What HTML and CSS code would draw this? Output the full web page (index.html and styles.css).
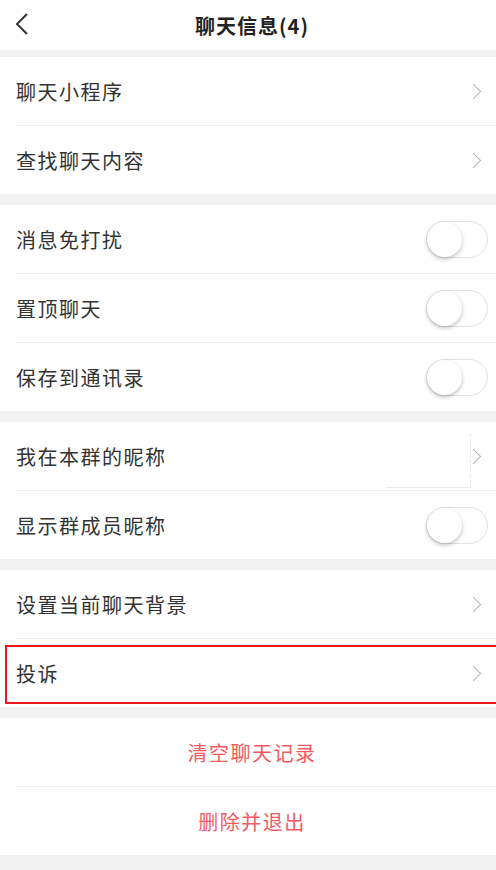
FILE: index.html
```html
<!DOCTYPE html>
<html lang="zh-CN">
<head>
  <meta charset="UTF-8">
  <meta name="viewport" content="width=device-width, initial-scale=1.0">
  <title>聊天信息</title>
  <link rel="stylesheet" href="styles.css">
</head>
<body>
  <div class="header">
    <span class="back">
      <svg width="14" height="22" viewBox="0 0 14 22"><path d="M12 1 L2 11 L12 21" fill="none" stroke="#333" stroke-width="2"/></svg>
    </span>
    <span class="title">聊天信息(4)</span>
  </div>

  <div class="group">
    <div class="row"><span class="label">聊天小程序</span><span class="arrow"></span></div>
    <div class="row"><span class="label">查找聊天内容</span><span class="arrow"></span></div>
  </div>

  <div class="group">
    <div class="row"><span class="label">消息免打扰</span><span class="switch"></span></div>
    <div class="row"><span class="label">置顶聊天</span><span class="switch"></span></div>
    <div class="row"><span class="label">保存到通讯录</span><span class="switch"></span></div>
  </div>

  <div class="group">
    <div class="row"><span class="label">我在本群的昵称</span><span class="ghost"></span><span class="arrow"></span></div>
    <div class="row"><span class="label">显示群成员昵称</span><span class="switch"></span></div>
  </div>

  <div class="group">
    <div class="row"><span class="label">设置当前聊天背景</span><span class="arrow"></span></div>
    <div class="row marked"><span class="label">投诉</span><span class="arrow"></span></div>
  </div>

  <div class="group">
    <div class="row action">清空聊天记录</div>
    <div class="row action">删除并退出</div>
  </div>
</body>
</html>
```

FILE: styles.css
```css
body {
  margin: 0;
  background-color: #f2f2f2;
  font-family: "Noto Sans CJK SC", "Noto Sans", sans-serif;
  color: #333;
}
.header {
  height: 50px;
  background-color: #fff;
  display: flex;
  align-items: center;
  justify-content: center;
  position: relative;
  margin-bottom: 7px;
}
.back {
  position: absolute;
  left: 15px;
  top: 13px;
  height: 22px;
}
.title {
  font-size: 20px;
  font-weight: bold;
  color: #222;
  letter-spacing: 1px;
  margin-left: 8px;
}
.group {
  background-color: #fff;
  margin-bottom: 11px;
}
.row {
  height: 68px;
  display: flex;
  align-items: center;
  justify-content: space-between;
  padding: 0 8px 0 16px;
  position: relative;
}
.row + .row {
  border-top: 1px solid #efefef;
}
.row + .row::before {
  content: "";
  position: absolute;
  left: 0;
  top: -1px;
  width: 16px;
  height: 1px;
  background-color: #fff;
}
.label {
  font-size: 20px;
  letter-spacing: 1.5px;
}
.arrow {
  width: 10px;
  height: 10px;
  border-top: 1.5px solid #b4b4b4;
  border-right: 1.5px solid #b4b4b4;
  transform: rotate(45deg);
  margin-right: 9px;
}
.switch {
  width: 60px;
  height: 35px;
  border: 1px solid #e2e2e2;
  border-radius: 19px;
  background-color: #fff;
  position: relative;
}
.switch::after {
  content: "";
  position: absolute;
  left: 0;
  top: 0;
  width: 35px;
  height: 35px;
  border-radius: 50%;
  background-color: #fff;
  box-shadow: 0 2px 4px rgba(0, 0, 0, 0.25);
}
.ghost {
  position: absolute;
  left: 386px;
  top: 12px;
  width: 84px;
  height: 53px;
  border-right: 1px dashed #e6e6e6;
  border-bottom: 1px solid #ededed;
}
.marked::after {
  content: "";
  position: absolute;
  left: 5px;
  right: -2px;
  top: 6px;
  bottom: 3px;
  border: 2px solid #f0141c;
}
.action {
  justify-content: center;
  padding: 0 0 0 8px;
  font-size: 20px;
  letter-spacing: 1.5px;
  color: #f45a60;
}
```
